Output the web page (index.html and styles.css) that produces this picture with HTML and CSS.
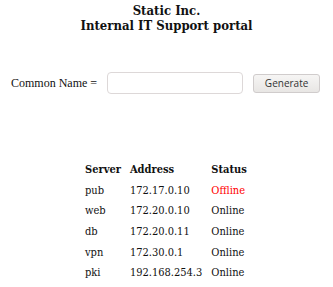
FILE: index.html
```html
<!DOCTYPE html>
<html lang="en">
  <head>
    <meta charset="utf-8">
    <title>Internal IT Support portal</title>
    <link rel="stylesheet" href="styles.css">
  </head>
  <body>
    <h1 class="title">Static Inc.<br>Internal IT Support portal</h1>
    <form class="cn-form">
      <label for="cn">Common Name =</label>
      <input id="cn" type="text" class="cn-input">
      <button type="button" class="cn-button">Generate</button>
    </form>
    <table class="servers">
      <thead>
        <tr><th>Server</th><th>Address</th><th>Status</th></tr>
      </thead>
      <tbody>
        <tr><td>pub</td><td>172.17.0.10</td><td class="offline">Offline</td></tr>
        <tr><td>web</td><td>172.20.0.10</td><td>Online</td></tr>
        <tr><td>db</td><td>172.20.0.11</td><td>Online</td></tr>
        <tr><td>vpn</td><td>172.30.0.1</td><td>Online</td></tr>
        <tr><td>pki</td><td>192.168.254.3</td><td>Online</td></tr>
      </tbody>
    </table>
  </body>
</html>
```

FILE: styles.css
```css
* {
  box-sizing: border-box;
}

body {
  margin: 0;
  padding: 3px 0 0;
  font-family: 'DejaVu Serif Condensed', 'DejaVu Serif', serif;
  font-stretch: condensed;
  color: #111;
  background: #fff;
}

.title {
  margin: 0;
  font-size: 13px;
  line-height: 15px;
  text-align: center;
  font-weight: bold;
}

.cn-form {
  display: flex;
  align-items: center;
  margin: 39px 0 0 11px;
}

.cn-form label {
  font-family: 'Liberation Serif', serif;
  font-stretch: normal;
  font-size: 12px;
  margin-right: 10px;
}

.cn-input {
  width: 136px;
  height: 22px;
  border: 1px solid #ddd8d8;
  border-radius: 4px;
  background: #fff;
}

.cn-button {
  margin-left: 10px;
  width: 67px;
  height: 19px;
  padding: 0;
  font-family: 'Open Sans', sans-serif;
  font-stretch: normal;
  font-size: 10px;
  color: #333;
  border: 1px solid #d0cccc;
  border-radius: 3px;
  background: linear-gradient(#f6f5f4, #e8e6e4);
}

.servers {
  margin: 65px 0 0 83px;
  border-collapse: collapse;
  font-size: 11px;
}

.servers th,
.servers td {
  text-align: left;
  padding: 0 7px 0 2px;
  height: 20.7px;
}

.servers th {
  font-weight: bold;
}

.offline {
  color: #ff0000;
}
```
